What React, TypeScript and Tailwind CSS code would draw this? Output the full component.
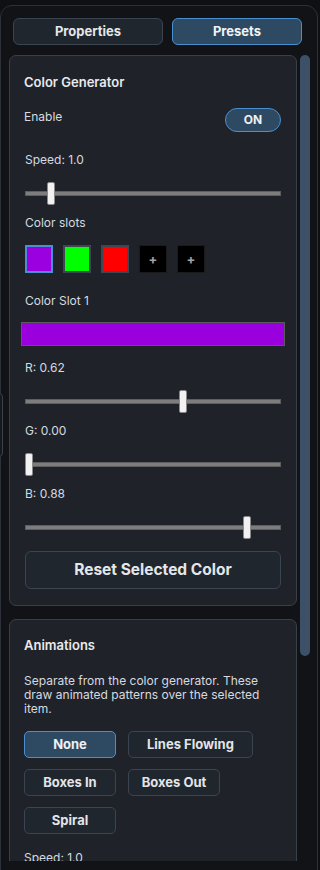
import React from 'react';

const font = { fontFamily: 'Inter, "Noto Sans", sans-serif' };

/** Flat range slider drawn with divs */
function Slider({ value }: { value: number }) {
  return (
    <div className="relative h-[23px] w-full">
      <div className="absolute left-0 right-0 top-[9px] h-[5px] bg-[#7d7d7d] border border-[#5e5e5e]" />
      <div
        className="absolute top-0 h-[23px] w-[8px] rounded-[2px] bg-[#f2f2f2] border border-[#8a8a8a]"
        style={{ left: `calc(${value * 100}% - ${value * 8}px)` }}
      />
    </div>
  );
}

function Label({ children, className = '' }: { children: React.ReactNode; className?: string }) {
  return <div className={`text-[12px] leading-[16px] text-[#d6dae0] ${className}`}>{children}</div>;
}

function ColorSlot({ color, selected }: { color?: string; selected?: boolean }) {
  if (!color) {
    return (
      <div className="w-[28px] h-[28px] bg-black border border-[#1a1a1a] flex items-center justify-center text-[#a0a4aa] text-[13px] font-bold leading-none">
        +
      </div>
    );
  }
  return (
    <div
      className={`w-[28px] h-[28px] border-2 ${selected ? 'border-[#4a8fd0]' : 'border-[#3d4652]'}`}
      style={{ backgroundColor: color }}
    />
  );
}

function AnimButton({ label, active, wide }: { label: string; active?: boolean; wide?: boolean }) {
  return (
    <button
      type="button"
      className={`h-[27px] ${wide ? 'px-[18px]' : 'min-w-[92px] px-[11px]'} rounded-[5px] border text-[13px] font-bold ${
        active ? 'bg-[#2e4a63] border-[#4a8fd0] text-[#eef1f4]' : 'bg-[#20262d] border-[#3b4552] text-[#e2e5e9]'
      }`}
    >
      {label}
    </button>
  );
}

export default function App() {
  return (
    <div className="w-[320px] h-[870px] overflow-hidden bg-[#0e1013] pt-[5px] relative" style={font}>
      {/* sliver of a panel behind, peeking at the left edge */}
      <div className="absolute left-[-8px] top-[393px] w-[11px] h-[64px] rounded-[4px] border border-[#3a414b] bg-[#15181c]" />

      <div className="w-[318px] h-[900px] rounded-[12px] border border-[#2c3139] bg-[#111317]">
        {/* Tabs */}
        <div className="flex gap-[9px] pl-[12px] pt-[12px]">
          <button
            type="button"
            className="w-[150px] h-[27px] rounded-[6px] bg-[#20262d] border border-[#3b4552] text-[13px] font-bold text-[#e4e7ea]"
          >
            Properties
          </button>
          <button
            type="button"
            className="w-[130px] h-[27px] rounded-[6px] bg-[#2e4a63] border border-[#4a8fd0] text-[13px] font-bold text-[#f0f3f6]"
          >
            Presets
          </button>
        </div>

        {/* Scroll area */}
        <div className="flex mt-[10px] ml-[8px] h-[806px] overflow-hidden">
          <div className="w-[288px] flex flex-col gap-[13px]">
            {/* Color Generator card */}
            <div className="rounded-[7px] border border-[#3a4048] bg-[#1f2329] pt-[17px] pb-[16px] px-[14px]">
              <div className="text-[13px] leading-[18px] font-semibold text-[#e8eaed]">Color Generator</div>

              <div className="flex justify-between items-start mt-[17px] pr-[1px]">
                <Label className="leading-[18px]">Enable</Label>
                <button
                  type="button"
                  className="w-[56px] h-[24px] rounded-full bg-[#2e4a63] border border-[#4a8fd0] text-[12px] font-bold text-[#eef1f4]"
                >
                  ON
                </button>
              </div>

              <div className="pl-[1px] pr-[1px]">
                <Label className="mt-[20px]">Speed: 1.0</Label>
                <div className="mt-[14px]">
                  <Slider value={0.09} />
                </div>

                <Label className="mt-[10px]">Color slots</Label>
                <div className="flex gap-[10px] mt-[14px]">
                  <ColorSlot color="#9a00e0" selected />
                  <ColorSlot color="#00ff00" />
                  <ColorSlot color="#ff0000" />
                  <ColorSlot />
                  <ColorSlot />
                </div>

                <Label className="mt-[20px]">Color Slot 1</Label>
              </div>
              <div className="mt-[13px] mx-[-3px] h-[24px] bg-[#9a00dd] border border-[#5a5a5a]" />

              <div className="pl-[1px] pr-[1px]">
                <Label className="mt-[14px]">R: 0.62</Label>
                <div className="mt-[14px]">
                  <Slider value={0.62} />
                </div>

                <Label className="mt-[10px]">G: 0.00</Label>
                <div className="mt-[14px]">
                  <Slider value={0} />
                </div>

                <Label className="mt-[10px]">B: 0.88</Label>
                <div className="mt-[14px]">
                  <Slider value={0.88} />
                </div>

                <button
                  type="button"
                  className="mt-[12px] w-full h-[38px] rounded-[6px] bg-[#20262d] border border-[#3b4552] text-[15.5px] font-bold text-[#e4e7ea]"
                >
                  Reset Selected Color
                </button>
              </div>
            </div>

            {/* Animations card */}
            <div className="rounded-[7px] border border-[#3a4048] bg-[#1f2329] pt-[16px] pb-[17px] px-[14px]">
              <div className="text-[13px] leading-[18px] font-semibold text-[#e8eaed]">Animations</div>
              <div className="mt-[20px] text-[12px] leading-[14px] text-[#d6dae0] pr-[8px]">
                Separate from the color generator. These draw animated patterns over the selected item.
              </div>
              <div className="mt-[15px] flex flex-col gap-[11px]">
                <div className="flex gap-[12px]">
                  <AnimButton label="None" active />
                  <AnimButton label="Lines Flowing" wide />
                </div>
                <div className="flex gap-[12px]">
                  <AnimButton label="Boxes In" />
                  <AnimButton label="Boxes Out" />
                </div>
                <div className="flex gap-[12px]">
                  <AnimButton label="Spiral" />
                </div>
              </div>
              <Label className="mt-[16px]">Speed: 1.0</Label>
            </div>
          </div>

          {/* Scrollbar */}
          <div className="ml-[3px] w-[10px] h-full">
            <div className="w-[10px] h-[601px] rounded-full bg-[#3c5168]" />
          </div>
        </div>
      </div>
    </div>
  );
}
